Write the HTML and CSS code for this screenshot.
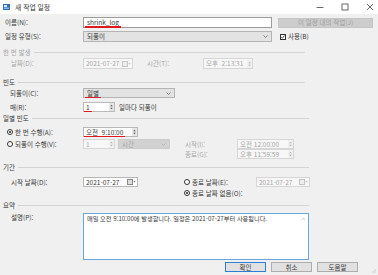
FILE: index.html
```html
<!DOCTYPE html>
<html lang="ko">
<head>
  <meta charset="UTF-8" />
  <title>새 작업 일정</title>
  <link rel="stylesheet" href="styles.css">
</head>
<body>
  <div class="window">

    <div class="titlebar">
      <svg class="app-icon" width="7" height="6" viewBox="0 0 7 6">
        <rect x="0" y="0" width="7" height="6" fill="#2f6fc0"/>
        <rect x="1" y="1" width="3" height="2" fill="#dbe8f7"/>
        <rect x="1" y="3.5" width="5" height="1.5" fill="#8fb6e6"/>
      </svg>
      <span class="title">새 작업 일정</span>
      <div class="winctl">
        <svg width="8" height="8" viewBox="0 0 8 8"><line x1="0.5" y1="4.5" x2="7.5" y2="4.5" stroke="#444" stroke-width="0.8"/></svg>
        <svg width="8" height="8" viewBox="0 0 8 8"><rect x="1" y="1" width="6" height="6" fill="none" stroke="#444" stroke-width="0.8"/></svg>
        <svg width="8" height="8" viewBox="0 0 8 8"><path d="M1 1 L7 7 M7 1 L1 7" stroke="#444" stroke-width="0.8"/></svg>
      </div>
    </div>

    <div class="content">
      <div class="row r-name">
        <span class="lbl">이름(N):</span>
        <div class="field f-name"><span class="mark">shrink_log</span></div>
        <div class="btn btn-jobs">이 일정 내의 작업(J)</div>
      </div>

      <div class="row r-type">
        <span class="lbl">일정 유형(S):</span>
        <div class="combo f-type"><span>되풀이</span><svg class="chev" width="5" height="3" viewBox="0 0 5 3"><path d="M0.5 0.5 L2.5 2.5 L4.5 0.5" fill="none" stroke="#555" stroke-width="0.7"/></svg></div>
        <span class="check"><svg width="6" height="6" viewBox="0 0 6 6"><path d="M1.2 3 L2.5 4.3 L4.9 1.5" fill="none" stroke="#222" stroke-width="0.8"/></svg></span>
        <span class="check-lbl">사용(B)</span>
      </div>

      <div class="group g-short"><span class="gtitle dis">한 번 발생</span><span class="gline"></span></div>

      <div class="row r-once">
        <span class="lbl sub dis">날짜(D):</span>
        <div class="field f-date1 dis">
          <span>2021-07-27</span>
          <svg class="cal" width="9" height="6" viewBox="0 0 9 6"><rect x="0.5" y="0.5" width="5" height="5" fill="#eee" stroke="#c4c4c4"/><path d="M6.3 2.2 L8.7 2.2 L7.5 3.6Z" fill="#b5b5b5"/></svg>
        </div>
        <span class="lbl-mid dis">시간(T):</span>
        <div class="field f-time1 dis">
          <span>오후 &nbsp;2:13:31</span>
          <svg class="spin" width="5" height="8" viewBox="0 0 5 8"><rect width="5" height="8" fill="#f0f0f0"/><path d="M1.2 3.2 L2.5 1.8 L3.8 3.2Z M1.2 4.8 L2.5 6.2 L3.8 4.8Z" fill="#b0b0b0"/></svg>
        </div>
      </div>

      <div class="group g-short g-freq"><span class="gtitle">빈도</span><span class="gline"></span></div>

      <div class="row r-recur">
        <span class="lbl mid">되풀이(C):</span>
        <div class="combo f-recur"><span class="mark">일별</span><svg class="chev" width="5" height="3" viewBox="0 0 5 3"><path d="M0.5 0.5 L2.5 2.5 L4.5 0.5" fill="none" stroke="#555" stroke-width="0.7"/></svg></div>
      </div>

      <div class="row r-every">
        <span class="lbl mid">매(R):</span>
        <div class="field f-num">
          <span class="mark">1</span>
          <svg class="spin" width="5" height="8" viewBox="0 0 5 8"><rect width="5" height="8" fill="#e6e6e6"/><path d="M1.2 3.2 L2.5 1.8 L3.8 3.2Z M1.2 4.8 L2.5 6.2 L3.8 4.8Z" fill="#555"/></svg>
        </div>
        <span class="after">일마다 되풀이</span>
      </div>

      <div class="group g-daily"><span class="gtitle">일별 빈도</span><span class="gline"></span></div>

      <div class="row r-at">
        <span class="opt"><span class="radio on"></span>한 번 수행(A):</span>
        <div class="field f-time2">
          <span class="mark">오전 &nbsp;9:10:00</span>
          <svg class="spin" width="5" height="8" viewBox="0 0 5 8"><rect width="5" height="8" fill="#e6e6e6"/><path d="M1.2 3.2 L2.5 1.8 L3.8 3.2Z M1.2 4.8 L2.5 6.2 L3.8 4.8Z" fill="#555"/></svg>
        </div>
      </div>

      <div class="row r-every2">
        <span class="opt"><span class="radio"></span>되풀이 수행(V):</span>
        <div class="field f-num dis">
          <span>1</span>
          <svg class="spin" width="5" height="8" viewBox="0 0 5 8"><rect width="5" height="8" fill="#f0f0f0"/><path d="M1.2 3.2 L2.5 1.8 L3.8 3.2Z M1.2 4.8 L2.5 6.2 L3.8 4.8Z" fill="#b0b0b0"/></svg>
        </div>
        <div class="combo f-unit dis"><span>시간</span><svg class="chev" width="5" height="3" viewBox="0 0 5 3"><path d="M0.5 0.5 L2.5 2.5 L4.5 0.5" fill="none" stroke="#aaa" stroke-width="0.7"/></svg></div>
        <span class="lbl-rt dis">시작(I):</span>
        <div class="field f-time3 dis">
          <span>오전 12:00:00</span>
          <svg class="spin" width="5" height="8" viewBox="0 0 5 8"><rect width="5" height="8" fill="#f0f0f0"/><path d="M1.2 3.2 L2.5 1.8 L3.8 3.2Z M1.2 4.8 L2.5 6.2 L3.8 4.8Z" fill="#b0b0b0"/></svg>
        </div>
      </div>

      <div class="row r-end">
        <span class="lbl-rt dis">종료(G):</span>
        <div class="field f-time3 dis">
          <span>오후 11:59:59</span>
          <svg class="spin" width="5" height="8" viewBox="0 0 5 8"><rect width="5" height="8" fill="#f0f0f0"/><path d="M1.2 3.2 L2.5 1.8 L3.8 3.2Z M1.2 4.8 L2.5 6.2 L3.8 4.8Z" fill="#b0b0b0"/></svg>
        </div>
      </div>

      <div class="group g-period"><span class="gtitle">기간</span><span class="gline"></span></div>

      <div class="row r-start">
        <span class="lbl sub">시작 날짜(D):</span>
        <div class="field f-date2">
          <span>2021-07-27</span>
          <svg class="cal" width="9" height="6" viewBox="0 0 9 6"><rect x="0.5" y="0.5" width="5" height="5" fill="#ddd" stroke="#8a8a8a"/><path d="M6.3 2.2 L8.7 2.2 L7.5 3.6Z" fill="#555"/></svg>
        </div>
        <span class="opt opt-end"><span class="radio"></span>종료 날짜(E):</span>
        <div class="field f-date3 dis">
          <span>2021-07-27</span>
          <svg class="cal" width="9" height="6" viewBox="0 0 9 6"><rect x="0.5" y="0.5" width="5" height="5" fill="#eee" stroke="#c4c4c4"/><path d="M6.3 2.2 L8.7 2.2 L7.5 3.6Z" fill="#b5b5b5"/></svg>
        </div>
      </div>

      <div class="row r-noend">
        <span class="opt"><span class="radio on"></span>종료 날짜 없음(O):</span>
      </div>

      <div class="group g-sum"><span class="gtitle">요약</span><span class="gline"></span></div>

      <div class="row r-desc">
        <span class="lbl sub">설명(P):</span>
        <div class="memo">
          <span class="memo-text">매일 오전 9:10:00에 발생합니다. 일정은 2021-07-27부터 사용됩니다.</span>
          <svg class="scroll-up" width="5" height="4" viewBox="0 0 5 4"><path d="M0.8 3 L2.5 1.2 L4.2 3" fill="none" stroke="#b8b8b8" stroke-width="0.7"/></svg>
        </div>
      </div>

      <div class="row r-btns">
        <div class="btn btn-ok">확인</div>
        <div class="btn">취소</div>
        <div class="btn">도움말</div>
      </div>
    </div>

    <svg class="grip" width="5" height="5" viewBox="0 0 5 5">
      <rect x="3.5" y="3.5" width="1" height="1" fill="#aaa"/>
      <rect x="1.5" y="3.5" width="1" height="1" fill="#aaa"/>
      <rect x="3.5" y="1.5" width="1" height="1" fill="#aaa"/>
    </svg>
  </div>
</body>
</html>
```

FILE: styles.css
```css
/* scaled-down windows dialog */
* {
  box-sizing: border-box;
}

body {
  margin: 0;
  background: #f0f0f0;
  font-family: "Noto Sans CJK KR", "Noto Sans", sans-serif;
  font-size: 6.5px;
  line-height: 1;
  color: #383838;
}

.window {
  width: 378px;
  height: 275px;
  position: relative;
  overflow: hidden;
}

.titlebar {
  height: 14px;
  background: #fff;
  display: flex;
  align-items: center;
}

.app-icon {
  margin-left: 3px;
}

.title {
  margin-left: 5px;
  font-size: 6.8px;
  color: #333;
}

.winctl {
  margin-left: auto;
  display: flex;
  gap: 17px;
  margin-right: 4px;
}

.content {
  display: flex;
  flex-direction: column;
}

.row {
  display: flex;
  align-items: center;
  height: 10px;
}

.lbl {
  width: 83px;
  padding-left: 5px;
  flex-shrink: 0;
}

.lbl.sub {
  padding-left: 11px;
}

.lbl.mid {
  padding-left: 10px;
}

.dis {
  color: #a6a6a6;
}

.field {
  height: 100%;
  background: #fff;
  border: 1px solid #b9b9b9;
  display: flex;
  align-items: center;
  padding-left: 2px;
  flex-shrink: 0;
}

.field.dis {
  border-color: #d6d6d6;
  background: #f7f7f7;
}

.combo {
  height: 100%;
  background: #e3e3e3;
  border: 1px solid #b4b4b4;
  display: flex;
  align-items: center;
  padding-left: 3px;
  flex-shrink: 0;
}

.combo.dis {
  background: #d2d2d2;
  border-color: #cbcbcb;
}

.chev {
  margin-left: auto;
  margin-right: 3px;
}

.mark {
  position: relative;
}

.mark::after {
  content: "";
  position: absolute;
  left: -2px;
  right: -2px;
  bottom: -2px;
  height: 1.3px;
  background: #e0191e;
}

.spin {
  margin-left: auto;
  margin-right: 0.5px;
  flex-shrink: 0;
}

.cal {
  margin-left: auto;
  margin-right: 1px;
  flex-shrink: 0;
}

.btn {
  height: 100%;
  width: 41px;
  background: #e1e1e1;
  border: 1px solid #adadad;
  display: flex;
  align-items: center;
  justify-content: center;
  flex-shrink: 0;
}

/* name / type */
.r-name {
  margin-top: 3px;
  height: 11px;
}

.f-name {
  width: 189px;
  border-color: #9c9c9c;
  padding-left: 3px;
}

.btn-jobs {
  margin-left: 6px;
  width: 95px;
  height: 10px;
  background: #cccccc;
  border-color: #c6c6c6;
  color: #9f9f9f;
}

.r-type {
  margin-top: 3px;
  height: 11px;
}

.f-type {
  width: 189px;
}

.check {
  margin-left: 8px;
  width: 6px;
  height: 6px;
  border: 0.8px solid #333;
  background: #fff;
  display: flex;
  flex-shrink: 0;
}

.check svg {
  margin: -0.8px;
}

.check-lbl {
  margin-left: 2px;
}

/* group headers */
.group {
  display: flex;
  align-items: center;
  height: 10px;
  width: 309px;
  padding-left: 3px;
}

.group.g-short {
  width: 305px;
  margin-top: 5px;
}

.group.g-freq {
  margin-top: 8px;
}

.gline {
  flex: 1;
  height: 1px;
  margin-left: 3px;
  background: #d4d4d4;
}

/* one time */
.r-once {
  margin-top: 1px;
  height: 11px;
}

.f-date1 {
  width: 50px;
}

.lbl-mid {
  margin-left: 14px;
  width: 56px;
}

.f-time1 {
  width: 50px;
}

/* frequency */
.r-recur {
  margin-top: 1px;
}

.f-recur {
  width: 92px;
}

.r-every {
  margin-top: 4px;
}

.f-num {
  width: 32px;
}

.after {
  margin-left: 4px;
}

.g-daily {
  margin-top: 1px;
}

/* daily frequency */
.opt {
  width: 83px;
  padding-left: 7px;
  display: flex;
  align-items: center;
  flex-shrink: 0;
}

.radio {
  width: 6px;
  height: 6px;
  border: 0.8px solid #333;
  border-radius: 50%;
  background: #fff;
  margin-right: 2px;
  display: flex;
  align-items: center;
  justify-content: center;
  flex-shrink: 0;
}

.radio.on::after {
  content: "";
  width: 2.6px;
  height: 2.6px;
  border-radius: 50%;
  background: #222;
}

.r-at {
  margin-top: 4px;
}

.f-time2 {
  width: 55px;
}

.r-every2 {
  margin-top: 2px;
}

.f-unit {
  margin-left: 3px;
  width: 52px;
}

.lbl-rt {
  margin-left: 15px;
  width: 52px;
  flex-shrink: 0;
}

.f-time3 {
  width: 57px;
}

.r-end .lbl-rt {
  margin-left: 185px;
}

.g-period {
  margin-top: 3px;
}

/* period */
.r-start {
  margin-top: 5px;
}

.f-date2 {
  width: 55px;
}

.opt-end {
  margin-left: 46px;
  width: 72px;
  padding-left: 0;
}

.f-date3 {
  width: 54px;
}

.r-noend {
  margin-top: 1px;
}

.r-noend .opt {
  width: auto;
  padding-left: 184px;
}

.g-sum {
  margin-top: 2px;
}

/* summary */
.r-desc {
  margin-top: 3px;
  height: 47px;
  align-items: flex-start;
}

.r-desc .lbl {
  padding-top: 1px;
}

.memo {
  width: 226px;
  height: 47px;
  background: #fff;
  border: 1px solid #6aa6e0;
  padding: 2px 2px 2px 3px;
  display: flex;
  align-items: flex-start;
}

.memo-text {
  font-size: 6.2px;
}

.scroll-up {
  margin-left: auto;
  margin-top: 1px;
  flex-shrink: 0;
}

.r-btns {
  margin-top: 2px;
  height: 10px;
  padding-left: 225px;
  gap: 5px;
}

.btn-ok {
  border-color: #2b7fd4;
}

.grip {
  position: absolute;
  right: 2px;
  bottom: 2px;
}
```
